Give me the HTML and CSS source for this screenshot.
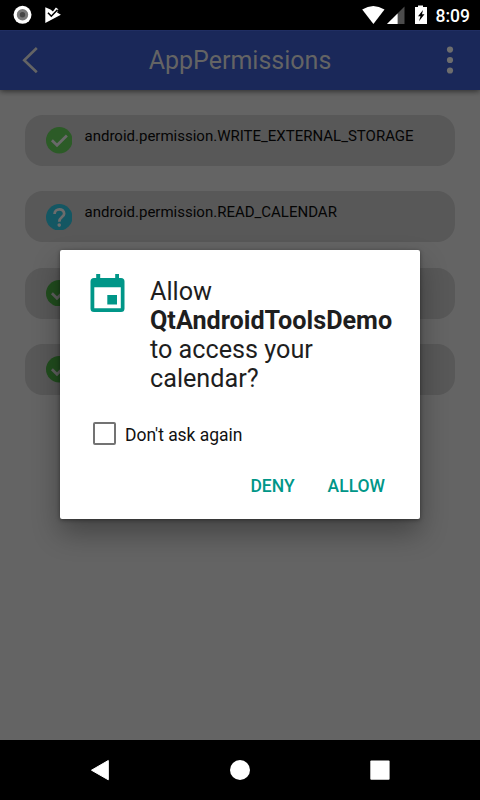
FILE: index.html
```html
<!DOCTYPE html>
<html lang="en">
<head>
<meta charset="utf-8">
<title>AppPermissions</title>
<link rel="stylesheet" href="styles.css">
</head>
<body>
<div class="screen">
  <div class="status">
    <svg class="status-left" width="70" height="30" viewBox="0 0 70 30">
      <circle cx="22.5" cy="14.8" r="9" fill="#fff"/><circle cx="22.5" cy="14.8" r="5.7" fill="#777"/><circle cx="22.5" cy="14.8" r="2.7" fill="#444"/>
      <path d="M45.3 7.200l5.200 2.200 2.400 2.100 3-4 2.400 1.700-1.200 3.300 3.800 2.200-15.600 8.300z" fill="#fff"/>
      <path d="M48 12.800l3.300 3.400 6.200-6.500" fill="none" stroke="#000" stroke-width="1.600"/>
    </svg>
    <svg class="status-right" width="80" height="30" viewBox="0 0 80 30">
      <path d="M2.200 9.500Q13.300 2.500 24.500 9.500L13.400 24z" fill="#fff"/>
      <path d="M44.500 6.500V24H27z" fill="#4c4c4c"/><path d="M37.600 13.400V24H27z" fill="#fff"/>
      <path d="M55 7h3V5.500h5V7h4v17H55z" fill="#fff"/><path d="M63 10L58 16.200h2.500L59 21.200 64.500 14.200h-2.500z" fill="#000"/>
    </svg>
    <span class="clock">8:09</span>
  </div>
  <header class="bar">
    <svg width="60" height="60" viewBox="0 0 60 60"><path d="M36.800 18L24.200 30.300 36.800 42.200" fill="none" stroke="#646464" stroke-width="2.600"/></svg>
    <h1 class="title">AppPermissions</h1>
    <svg width="60" height="60" viewBox="0 0 60 60" fill="#6d6d6d"><circle cx="30" cy="19.600" r="3.100"/><circle cx="30" cy="30" r="3.100"/><circle cx="30" cy="40.500" r="3.100"/></svg>
  </header>
  <main class="list">
    <div class="item"><svg class="mark" viewBox="0 0 26 26"><circle cx="13" cy="13" r="13" fill="#2c5b27"/><path d="M5.800 13l5 5 9.700-9.700" fill="none" stroke="#696969" stroke-width="2.700"/></svg><span>android.permission.WRITE_EXTERNAL_STORAGE</span></div>
    <div class="item"><svg class="mark" viewBox="0 0 26 26"><circle cx="13" cy="13" r="13" fill="#145763"/><path d="M8.400 9.900C8.400 3.800 17.800 3.800 17.800 9.500 17.800 12.800 13 13 13 17.400" fill="none" stroke="#6c6c6c" stroke-width="2.700"/><circle cx="13" cy="20.700" r="1.800" fill="#6c6c6c"/></svg><span>android.permission.READ_CALENDAR</span></div>
    <div class="item"><svg class="mark" viewBox="0 0 26 26"><circle cx="13" cy="13" r="13" fill="#214d1e"/><path d="M5.800 13l5 5 9.700-9.700" fill="none" stroke="#606060" stroke-width="2.700"/></svg></div>
    <div class="item"><svg class="mark" viewBox="0 0 26 26"><circle cx="13" cy="13" r="13" fill="#214d1e"/><path d="M5.800 13l5 5 9.700-9.700" fill="none" stroke="#606060" stroke-width="2.700"/></svg></div>
  </main>
  <nav class="nav">
    <svg viewBox="0 0 140 60"><path d="M61.500 30.200L78.300 20.500V39.800z" fill="#fff" stroke="#fff" stroke-linejoin="round"/></svg>
    <svg viewBox="0 0 140 60"><circle cx="70" cy="30" r="10" fill="#fff"/></svg>
    <svg viewBox="0 0 140 60"><rect x="60.300" y="20.400" width="19.300" height="19.300" rx="1" fill="#fff"/></svg>
  </nav>
  <section class="dialog" role="dialog">
    <div class="ask">
      <svg class="calendar" width="36" height="40" viewBox="0 0 36 40" fill="#009688"><path d="M6.200 0h4v4h15V0h3.800v4H31q3.500 0 3.500 3.500v27Q34.500 38 31 38H4Q.5 38 .5 34.500v-27Q.5 4 4 4h2.200zM4.300 13.200v21h26.500v-21z" fill-rule="evenodd"/><path d="M17.300 21h9.700v9.500h-9.700z"/></svg>
      <p class="question">Allow<br><b>QtAndroidToolsDemo</b><br>to access your<br>calendar?</p>
    </div>
    <label class="again"><span class="box"></span><span class="again-text">Don't ask again</span></label>
    <div class="actions"><button>DENY</button><button>ALLOW</button></div>
  </section>
</div>
</body>
</html>
```
FILE: styles.css
```css
* { box-sizing: border-box; }
body { margin: 0; font-family: Roboto, sans-serif; }
.screen { position: relative; display: flex; flex-direction: column; width: 480px; height: 800px; overflow: hidden; background: #646464; }
.status { display: flex; height: 30px; flex: none; background: #000; }
.status-right { margin-left: 290px; }
.clock { margin-left: -4.500px; color: #fff; font-size: 17.500px; font-weight: 500; line-height: 33px; white-space: nowrap; }
.bar { display: flex; height: 60px; flex: none; background: #1a2859; border-top: 1px solid #202e62; box-shadow: 0 1px 6px rgba(0, 0, 0, .6); }
.bar svg { flex: none; margin-top: -1px; }
.title { flex: 1; margin: 0; text-align: center; font-size: 25px; font-weight: 400; line-height: 59px; color: #646464; }
.list { flex: 1; display: flex; flex-direction: column; gap: 25.300px; padding: 25px; }
.item { display: flex; height: 51px; flex: none; padding-left: 20.500px; border-radius: 18px; background: #585858; color: #050505; font-size: 15px; line-height: 43px; }
.mark { width: 26.500px; height: 26.500px; margin: 12.300px 12.500px 0 0; flex: none; }
.nav { display: flex; height: 60px; flex: none; padding: 0 30px; background: #000; }
.nav svg { width: 140px; height: 60px; }
.dialog { position: absolute; left: 60px; top: 250px; width: 360px; height: 269px; border-radius: 2px; background: #fff; box-shadow: 0 14px 28px rgba(0, 0, 0, .32), 0 1px 4px rgba(0, 0, 0, .4); color: #1e1e1e; }
.ask { display: flex; padding: 24px 0 0 30px; }
.calendar { margin-right: 24px; flex: none; }
.question { margin: 2.500px 0 0; font-size: 25.200px; line-height: 29.300px; white-space: nowrap; }
.again { display: flex; align-items: center; gap: 9px; height: 24px; margin: 28px 0 0 33px; font-size: 17.500px; letter-spacing: -.04px; color: #111; }
.again-text { padding-top: 2px; }
.box { width: 23px; height: 23px; border: 2px solid #737373; border-radius: 2px; }
.actions { display: flex; justify-content: flex-end; gap: 33px; margin: 30px 35px 0 0; }
.actions button { padding: 0; border: 0; background: none; color: #009688; font: 500 17.500px/21px Roboto, sans-serif; }
```
